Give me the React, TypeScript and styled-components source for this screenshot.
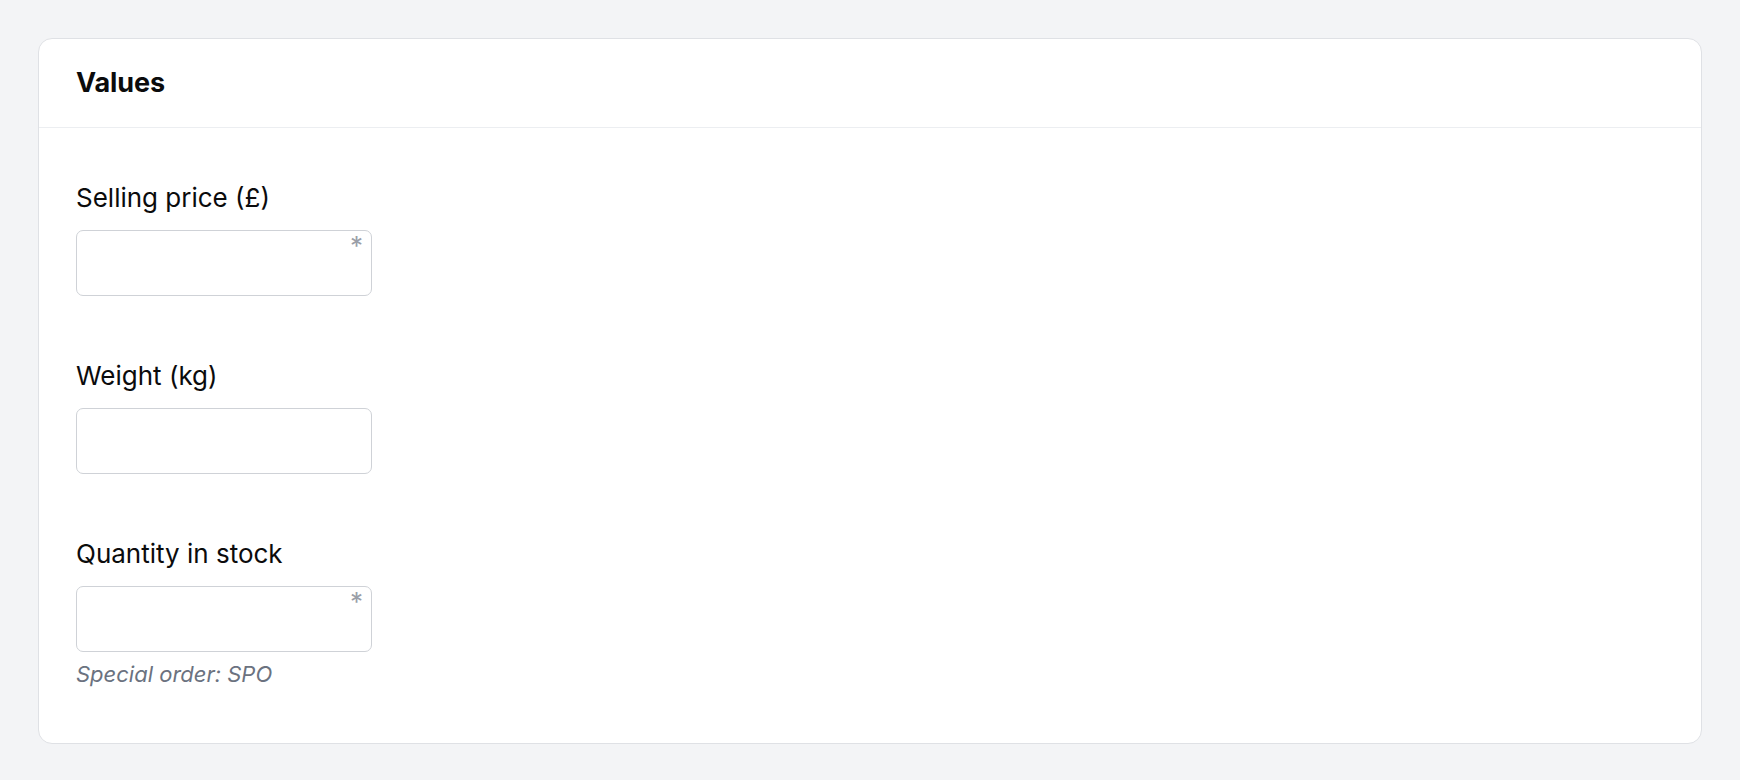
import React from "react";
import styled, { createGlobalStyle } from "styled-components";

const GlobalStyle = createGlobalStyle`
  html, body {
    margin: 0;
    padding: 0;
    background: #f3f4f6;
    font-family: Inter, "Noto Sans", sans-serif;
    color: #0b0b0c;
  }
  * {
    box-sizing: border-box;
  }
`;

const Page = styled.div`
  padding: 38px 38px 38px 38px;
`;

const Card = styled.section`
  background: #ffffff;
  border: 1px solid #dfe1e5;
  border-radius: 14px;
`;

const CardHeader = styled.header`
  height: 89px;
  display: flex;
  align-items: center;
  padding: 0 37px;
  border-bottom: 1px solid #eceef1;
`;

const Title = styled.h2`
  margin: 0;
  font-size: 27px;
  font-weight: 700;
  line-height: 32px;
  letter-spacing: -0.1px;
`;

const CardBody = styled.div`
  display: flex;
  flex-direction: column;
  gap: 64px;
  padding: 54px 37px 55px;
`;

const Field = styled.div`
  display: flex;
  flex-direction: column;
`;

const Label = styled.label`
  font-size: 26px;
  line-height: 32px;
  font-weight: 400;
  margin-bottom: 16px;
`;

const InputBox = styled.div`
  position: relative;
  width: 296px;
  height: 66px;
  border: 1.5px solid #cfd2d7;
  border-radius: 7px;
  background: #ffffff;
`;

const TextInput = styled.input`
  width: 100%;
  height: 100%;
  border: none;
  outline: none;
  background: transparent;
  padding: 0 16px;
  font-family: inherit;
  font-size: 22px;
  border-radius: 7px;
`;

const Required = styled.span`
  position: absolute;
  top: 3px;
  right: 8px;
  font-size: 26px;
  line-height: 24px;
  color: #9a9fa8;
`;

const Hint = styled.p`
  margin: 8px 0 0;
  font-size: 22px;
  line-height: 28px;
  font-style: italic;
  color: #6b7280;
`;

interface FieldProps {
  label: string;
  required?: boolean;
  hint?: string;
}

const FormField: React.FC<FieldProps> = ({ label, required, hint }) => {
  return (
    <Field>
      <Label>{label}</Label>
      <InputBox>
        <TextInput type="text" aria-label={label} />
        {required && <Required>*</Required>}
      </InputBox>
      {hint && <Hint>{hint}</Hint>}
    </Field>
  );
};

const App: React.FC = () => {
  return (
    <>
      <GlobalStyle />
      <Page>
        <Card>
          <CardHeader>
            <Title>Values</Title>
          </CardHeader>
          <CardBody>
            <FormField label="Selling price (£)" required />
            <FormField label="Weight (kg)" />
            <FormField
              label="Quantity in stock"
              required
              hint="Special order: SPO"
            />
          </CardBody>
        </Card>
      </Page>
    </>
  );
};

export default App;
